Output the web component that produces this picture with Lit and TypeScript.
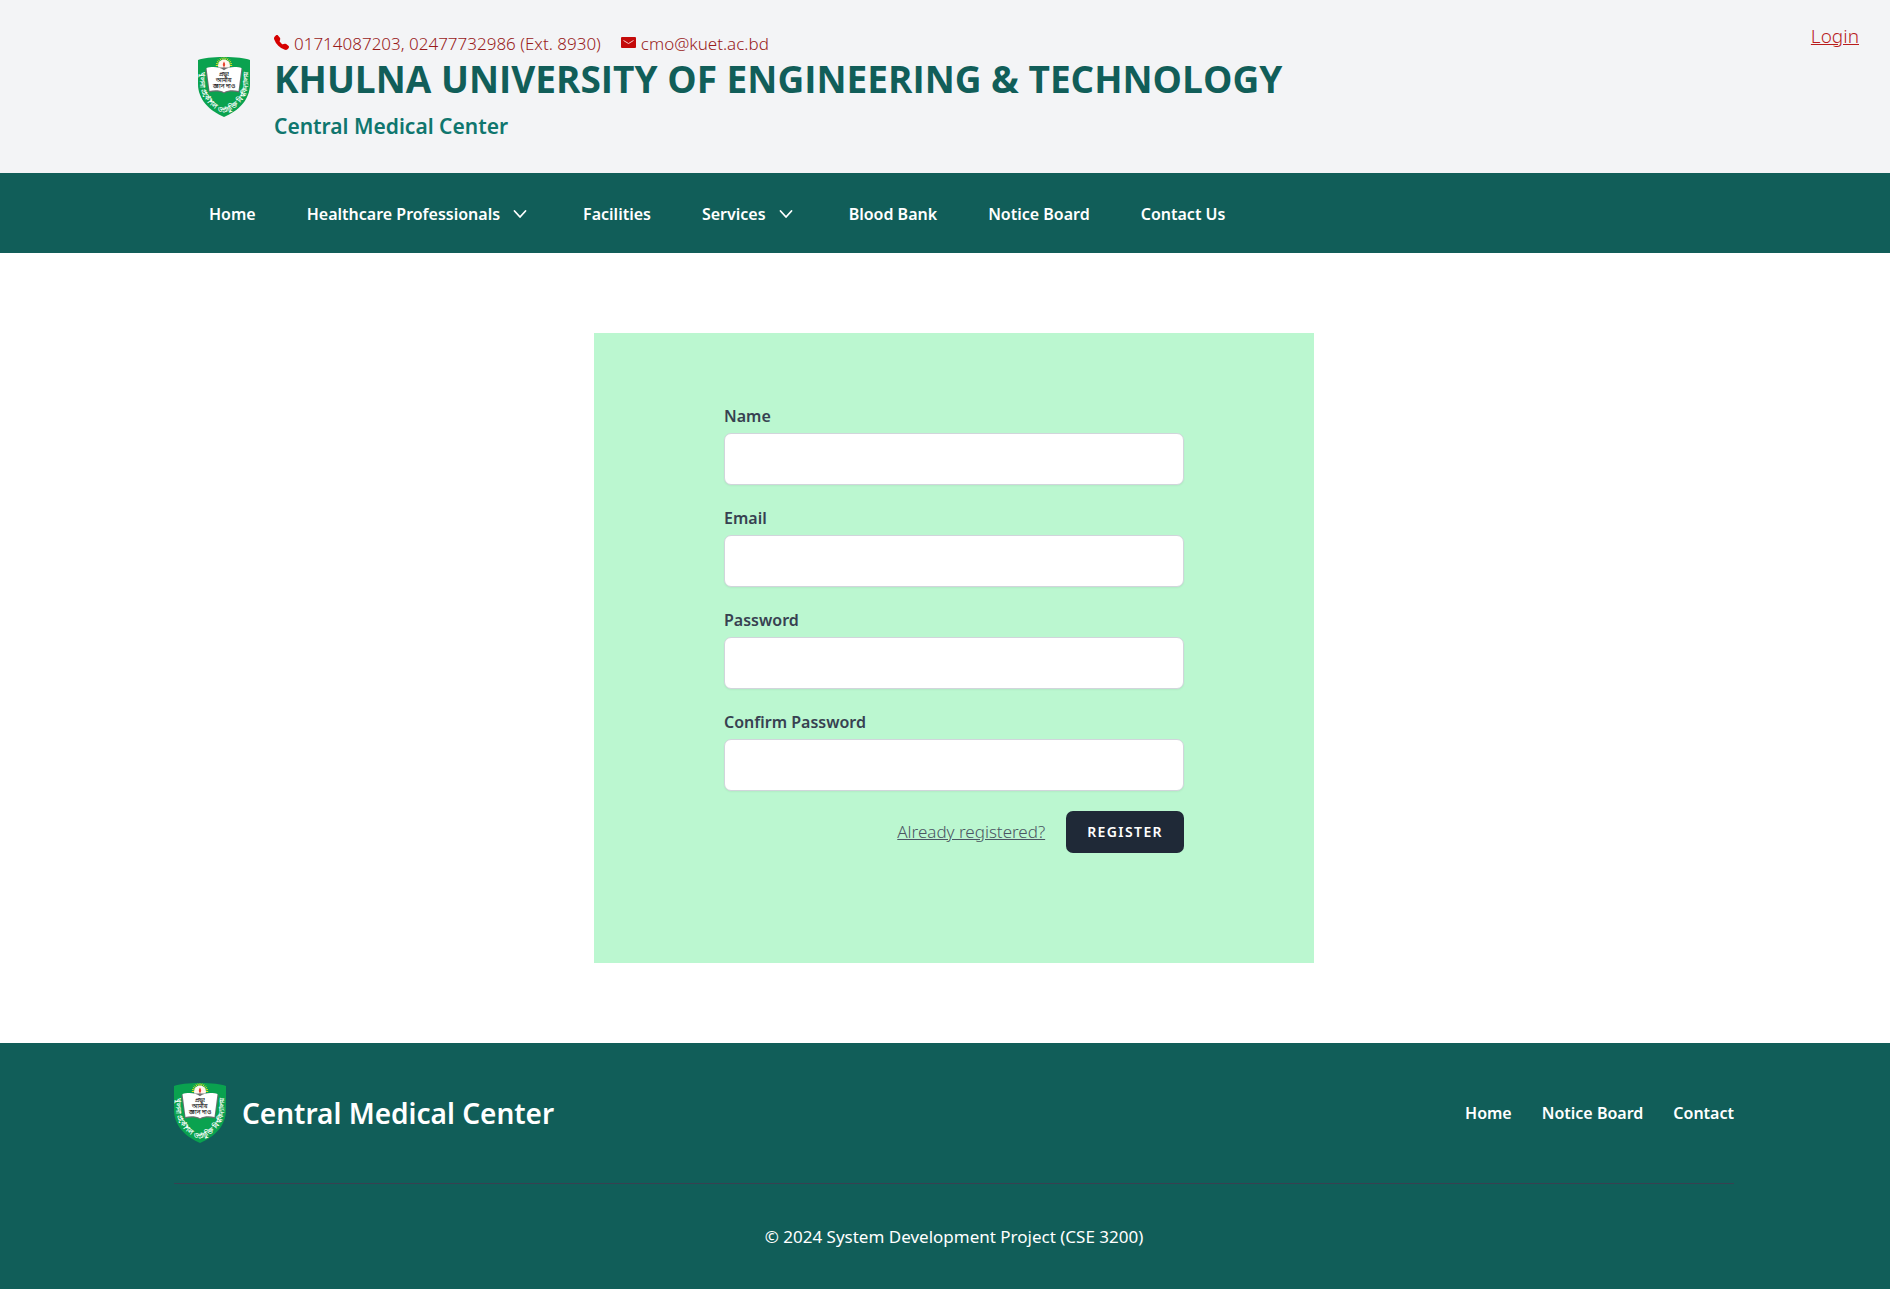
import { LitElement, html, svg, css } from "lit";
import { customElement } from "lit/decorators.js";

@customElement("kuet-crest")
class KuetCrest extends LitElement {
  static styles = css`
    :host {
      display: block;
      flex: none;
      width: 52px;
      height: 60px;
    }
    .crest {
      display: block;
      width: 100%;
      height: 100%;
    }
    .motto {
      font: 700 6px "Noto Sans", sans-serif;
      fill: #222;
      text-anchor: middle;
    }
    .ring {
      font: 700 7px "Noto Sans", sans-serif;
      fill: #fff;
      text-anchor: middle;
    }
  `;

  render() {
    const rays = Array.from({ length: 13 }, (_, i) => {
      const a = Math.PI + (i * Math.PI) / 12;
      const [c, s] = [Math.cos(a), Math.sin(a)];
      return svg`<line x1=${26 + 6 * c} y1=${8.5 + 6 * s} x2=${26 + 8.2 * c} y2=${8.5 + 8.2 * s} />`;
    });
    return html`
      <svg class="crest" viewBox="0 0 52 60" role="img" aria-label="KUET">
        <path d="M0 3C5 1 14 0 26 0s21 1 26 3v24c0 16-12 27-26 33C12 54 0 43 0 27z" fill="#0aa24f" />
        <g stroke="#d8e021" stroke-width="1">${rays}</g>
        <circle cx="26" cy="8.5" r="6" fill="#fff6ee" />
        <path d="M26 4.5c1.6 2.4 1.6 4.2 0 5.4-1.6-1.2-1.6-3 0-5.4z" fill="#e8432e" />
        <path d="M25.4 9.5h1.2V13h-1.2z" fill="#d98a84" />
        <path d="M7.5 12l3.500 23.500c5-1.400 11-1.400 15 1 4-2.400 10-2.400 15-1l3.500-23.500-3-1.500H10.500z" fill="#6d6f70" />
        <path d="M8.500 11c5-1.500 13-1.500 17.500 2.200C30.500 9.500 38.500 9.500 43.500 11L40.500 34c-5-1.200-10.500-1-14.500 1.300-4-2.300-9.500-2.500-14.500-1.300z" fill="#fff" />
        <text class="motto"><tspan x="26" y="19">প্রভু!</tspan><tspan x="26" y="25">আমায়</tspan><tspan x="26" y="31">জ্ঞান দাও</tspan></text>
        <path id="ring" d="M2 9v18c0 14 11 24 24 29C39 51 50 41 50 27V9" fill="none" />
        <text class="ring"><textPath href="#ring" startOffset="50%">খুলনা প্রকৌশল ও প্রযুক্তি বিশ্ববিদ্যালয়</textPath></text>
      </svg>
    `;
  }
}

interface NavItem {
  label: string;
  menu?: boolean;
}

@customElement("app-root")
class AppRoot extends LitElement {
  static styles = css`
    :host {
      display: flex;
      flex-direction: column;
      min-height: 100vh;
      background: #fff;
      color: #374151;
      font-family: "Noto Sans", "Open Sans", sans-serif;
      font-size: 17px;
      line-height: 24px;
    }
    * {
      box-sizing: border-box;
    }
    a {
      color: inherit;
      text-decoration: none;
    }

    .header {
      display: flex;
      align-items: center;
      gap: 24px;
      padding-left: 198px;
      background: #f3f4f6;
    }
    .brand {
      flex: 1;
      padding: 32px 0 33px;
    }
    .contacts {
      display: flex;
      gap: 20px;
      color: #991b1b;
      font-weight: 300;
    }
    .contact {
      display: flex;
      gap: 5px;
    }
    .contact svg {
      width: 15px;
      height: 15px;
      margin-top: 3px;
    }
    .title {
      margin: 0;
      color: #115e59;
      font-family: "Open Sans", "Noto Sans", sans-serif;
      font-size: 37px;
      font-weight: 700;
      line-height: 46px;
    }
    .subtitle {
      margin: 10px 0 0;
      color: #0f766e;
      font-size: 21px;
      font-weight: 600;
      line-height: 28px;
    }
    .login {
      align-self: flex-start;
      padding: 22px 31px;
      color: #b91c1c;
      font-size: 19px;
      font-weight: 300;
      line-height: 28px;
      text-decoration: underline;
    }

    .nav {
      display: flex;
      flex-wrap: wrap;
      gap: 0 51px;
      padding: 29px 209px 27px;
      background: #115e59;
      color: #fff;
      font-size: 16px;
      font-weight: 600;
    }
    .nav-item {
      display: flex;
      gap: 8px;
      margin: 0;
      padding: 0;
      border: 0;
      background: none;
      color: inherit;
      font: inherit;
    }
    .nav-item svg {
      width: 24px;
      height: 24px;
    }

    .main {
      flex: 1;
      padding: 80px 0 80px 18px;
    }
    .card {
      display: flex;
      flex-direction: column;
      max-width: 720px;
      margin: 0 auto;
      padding: 71px 130px 110px;
      background: #bbf7d0;
    }
    .fields {
      display: grid;
      gap: 21px;
    }
    .label {
      display: block;
      margin-bottom: 5px;
      font-size: 16px;
      font-weight: 600;
    }
    .input {
      display: block;
      width: 100%;
      padding: 13px 14px;
      border: 1px solid #d1d5db;
      border-radius: 7px;
      background: #fff;
      box-shadow: 0 1px 2px rgb(0 0 0 / 0.05);
      color: #111827;
      font: inherit;
      line-height: 24px;
      height: 52px;
    }
    .actions {
      display: flex;
      align-items: center;
      justify-content: flex-end;
      gap: 21px;
      margin-top: 20px;
    }
    .registered {
      color: #4b5563;
      font-weight: 300;
      text-decoration: underline;
    }
    .submit {
      padding: 11px 21px;
      border: 0;
      border-radius: 7px;
      background: #1f2937;
      color: #fff;
      font: inherit;
      font-size: 14px;
      font-weight: 600;
      letter-spacing: 0.1em;
      line-height: 20px;
      text-transform: uppercase;
    }

    .footer {
      padding: 40px 0 40px 18px;
      background: #115e59;
      color: #fff;
    }
    .footer-inner {
      max-width: 1560px;
      margin: 0 auto;
    }
    .footer-top {
      display: flex;
      align-items: center;
      justify-content: space-between;
      padding-bottom: 40px;
      border-bottom: 1px solid #374151;
    }
    .footer-brand {
      display: flex;
      align-items: center;
      gap: 16px;
      font-size: 28px;
      font-weight: 600;
      line-height: 36px;
    }
    .footer-links {
      display: flex;
      gap: 30px;
      font-size: 16px;
      font-weight: 600;
    }
    .copyright {
      margin: 41px 0 0;
      text-align: center;
    }
  `;

  private nav: NavItem[] = [
    { label: "Home" },
    { label: "Healthcare Professionals", menu: true },
    { label: "Facilities" },
    { label: "Services", menu: true },
    { label: "Blood Bank" },
    { label: "Notice Board" },
    { label: "Contact Us" },
  ];

  private fields = [
    { id: "name", label: "Name", type: "text" },
    { id: "email", label: "Email", type: "email" },
    { id: "password", label: "Password", type: "password" },
    { id: "confirm", label: "Confirm Password", type: "password" },
  ];

  render() {
    return html`
      <header class="header">
        <kuet-crest></kuet-crest>
        <div class="brand">
          <div class="contacts">
            <span class="contact">
              <svg viewBox="0 0 16 16" fill="#d60000" aria-hidden="true">
                <path fill-rule="evenodd" d="M1.885.511a1.745 1.745 0 0 1 2.610.163L6.290 2.980c.329.423.445.974.315 1.494l-.547 2.190a.678.678 0 0 0 .178.643l2.457 2.457a.678.678 0 0 0 .644.178l2.189-.547a1.745 1.745 0 0 1 1.494.315l2.306 1.794c.829.645.905 1.870.163 2.611l-1.034 1.034c-.740.740-1.846 1.065-2.877.702a18.634 18.634 0 0 1-7.010-4.420 18.634 18.634 0 0 1-4.420-7.009c-.362-1.030-.037-2.137.703-2.877z" />
              </svg>
              <span>01714087203, 02477732986 (Ext. 8930)</span>
            </span>
            <span class="contact">
              <svg viewBox="0 0 15 15" aria-hidden="true">
                <rect y="2" width="15" height="11" rx="1" fill="#c40a0a" />
                <path d="M2.500 5.500L7.500 8.500l5-3" fill="none" stroke="#f6c9c9" />
              </svg>
              <span>cmo@kuet.ac.bd</span>
            </span>
          </div>
          <h1 class="title">KHULNA UNIVERSITY OF ENGINEERING &amp; TECHNOLOGY</h1>
          <p class="subtitle">Central Medical Center</p>
        </div>
        <a class="login" href="#login">Login</a>
      </header>

      <nav class="nav">
        ${this.nav.map(({ label, menu }) =>
          menu
            ? html`<button class="nav-item" type="button" aria-haspopup="true">
                ${label}
                <svg viewBox="0 0 24 24" fill="none" stroke="#fff" stroke-width="1.8" stroke-linecap="round" stroke-linejoin="round" aria-hidden="true">
                  <path d="M6.500 9l5.500 6 5.500-6" />
                </svg>
              </button>`
            : html`<a class="nav-item" href="#">${label}</a>`,
        )}
      </nav>

      <main class="main">
        <form class="card">
          <div class="fields">
            ${this.fields.map(
              (f) => html`<div>
                <label class="label" for=${f.id}>${f.label}</label>
                <input class="input" id=${f.id} name=${f.id} type=${f.type} />
              </div>`,
            )}
          </div>
          <div class="actions">
            <a class="registered" href="#login">Already registered?</a>
            <button class="submit" type="submit">Register</button>
          </div>
        </form>
      </main>

      <footer class="footer">
        <div class="footer-inner">
          <div class="footer-top">
            <div class="footer-brand"><kuet-crest></kuet-crest><span>Central Medical Center</span></div>
            <nav class="footer-links">
              <a href="#">Home</a>
              <a href="#">Notice Board</a>
              <a href="#">Contact</a>
            </nav>
          </div>
          <p class="copyright">© 2024 System Development Project (CSE 3200)</p>
        </div>
      </footer>
    `;
  }
}
